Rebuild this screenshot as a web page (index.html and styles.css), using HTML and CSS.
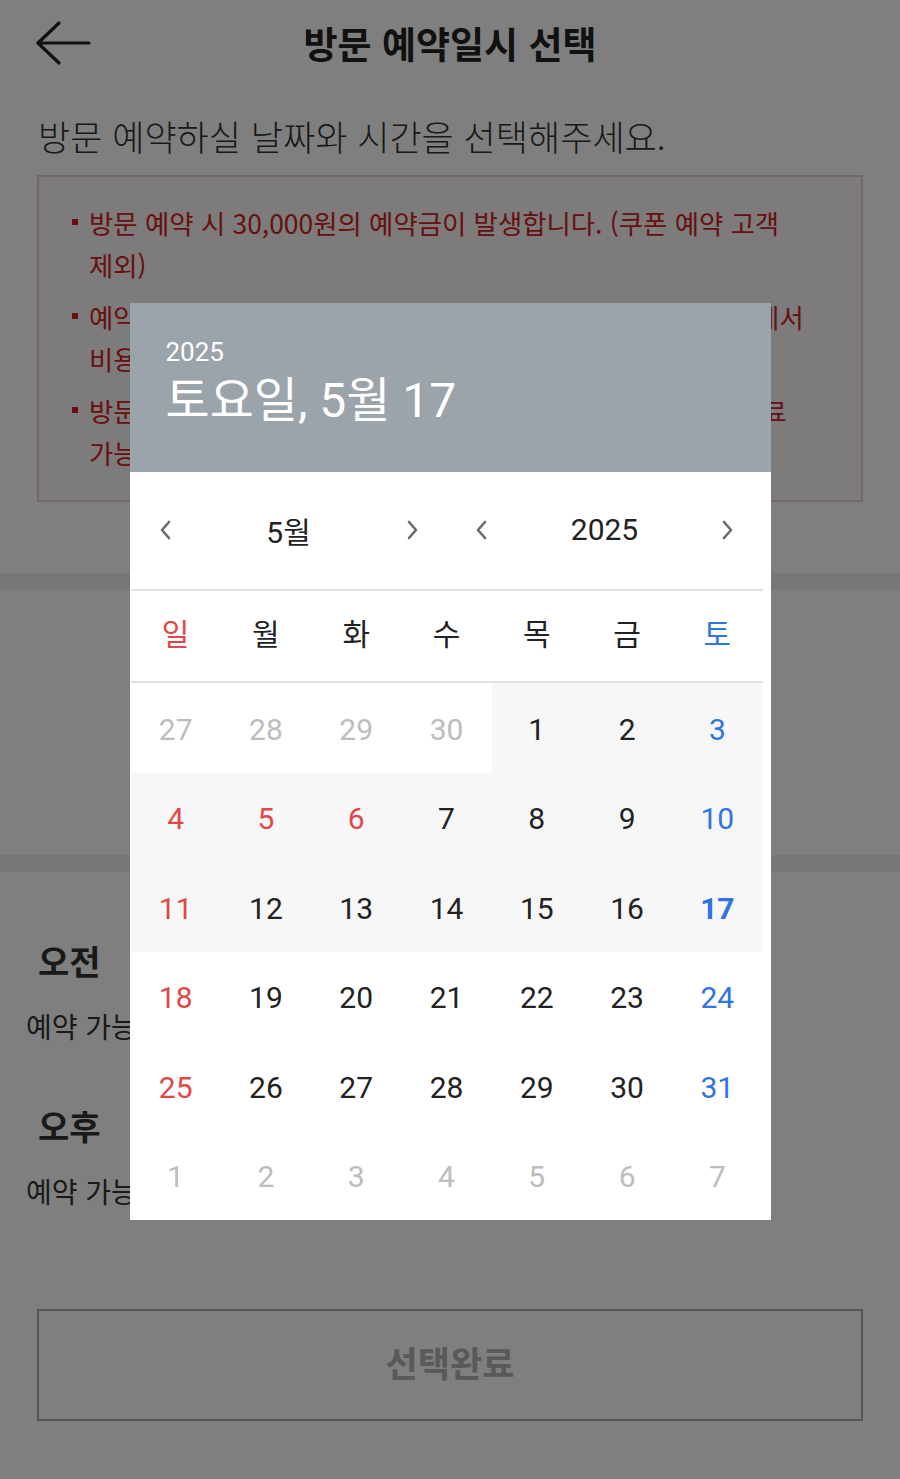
FILE: index.html
```html
<!DOCTYPE html>
<html lang="ko">
<head>
<meta charset="utf-8">
<title>방문 예약일시 선택</title>
<link rel="stylesheet" href="styles.css">
</head>
<body>
<div class="page">
  <header class="topbar">
    <span class="back">
      <svg width="58" height="46" viewBox="0 0 58 46"><polyline points="24,3 3,23 24,43" fill="none" stroke="#222" stroke-width="3.2" stroke-linecap="round" stroke-linejoin="round"/><line x1="3" y1="23" x2="54" y2="23" stroke="#222" stroke-width="3.2" stroke-linecap="round"/></svg>
    </span>
    <h1 class="title">방문 예약일시 선택</h1>
    <span></span>
  </header>

  <p class="intro">방문 예약하실 날짜와 시간을 선택해주세요.</p>

  <ul class="notice">
    <li>방문 예약 시 30,000원의 예약금이 발생합니다. (쿠폰 예약 고객 제외)</li>
    <li>예약 변경 및 취소는 방문 하루 전까지 고객센터나 마이페이지에서 비용 없이 가능합니다.</li>
    <li>방문 상담 후 계약 시 예약금은 시공비에서 전액이 차감되며 무료 가능합니다.</li>
  </ul>

  <div class="band"></div>
  <section class="date-area"></section>
  <div class="band"></div>

  <section class="times">
    <h3 class="slot-title">오전</h3>
    <p class="slot-info">예약 가능한 시간이 없습니다.</p>
    <h3 class="slot-title pm">오후</h3>
    <p class="slot-info">예약 가능한 시간이 없습니다.</p>
  </section>

  <button class="done">선택완료</button>
</div>

<div class="overlay">
  <div class="dialog">
    <div class="dlg-head">
      <div class="dlg-year">2025</div>
      <div class="dlg-date">토요일, 5월 17</div>
    </div>
    <div class="dlg-body">
      <div class="nav">
        <div class="nav-half">
          <svg class="chev" width="14" height="22" viewBox="0 0 14 22"><polyline points="10,3 3,11 10,19" fill="none" stroke="#6b6b6b" stroke-width="2.6" stroke-linecap="round" stroke-linejoin="round"/></svg>
          <span class="nav-label">5월</span>
          <svg class="chev" width="14" height="22" viewBox="0 0 14 22"><polyline points="4,3 11,11 4,19" fill="none" stroke="#6b6b6b" stroke-width="2.6" stroke-linecap="round" stroke-linejoin="round"/></svg>
        </div>
        <div class="nav-half">
          <svg class="chev" width="14" height="22" viewBox="0 0 14 22"><polyline points="10,3 3,11 10,19" fill="none" stroke="#6b6b6b" stroke-width="2.6" stroke-linecap="round" stroke-linejoin="round"/></svg>
          <span class="nav-label">2025</span>
          <svg class="chev" width="14" height="22" viewBox="0 0 14 22"><polyline points="4,3 11,11 4,19" fill="none" stroke="#6b6b6b" stroke-width="2.6" stroke-linecap="round" stroke-linejoin="round"/></svg>
        </div>
      </div>
      <div class="weekdays">
        <span class="sun">일</span><span>월</span><span>화</span><span>수</span><span>목</span><span>금</span><span class="sat">토</span>
      </div>
      <div class="days">
        <span class="other">27</span><span class="other">28</span><span class="other">29</span><span class="other">30</span><span class="wk">1</span><span class="wk">2</span><span class="wk sat">3</span>
        <span class="wk sun">4</span><span class="wk sun">5</span><span class="wk sun">6</span><span class="wk">7</span><span class="wk">8</span><span class="wk">9</span><span class="wk sat">10</span>
        <span class="wk sun">11</span><span class="wk">12</span><span class="wk">13</span><span class="wk">14</span><span class="wk">15</span><span class="wk">16</span><span class="wk sat sel">17</span>
        <span class="sun">18</span><span>19</span><span>20</span><span>21</span><span>22</span><span>23</span><span class="sat">24</span>
        <span class="sun">25</span><span>26</span><span>27</span><span>28</span><span>29</span><span>30</span><span class="sat">31</span>
        <span class="other">1</span><span class="other">2</span><span class="other">3</span><span class="other">4</span><span class="other">5</span><span class="other">6</span><span class="other">7</span>
      </div>
    </div>
  </div>
</div>
</body>
</html>
```

FILE: styles.css
```css
* { box-sizing: border-box; }
html, body { margin: 0; padding: 0; }
body {
  width: 900px;
  height: 1479px;
  background: #fff;
  font-family: "Noto Sans CJK KR", "Noto Sans", sans-serif;
  color: #222;
  overflow: hidden;
  position: relative;
}
.page { width: 900px; height: 1479px; }

.topbar {
  display: grid;
  grid-template-columns: 100px 1fr 100px;
  align-items: center;
  height: 86px;
}
.back { display: flex; padding-left: 35px; }
.back svg { display: block; }
.title {
  margin: 0;
  text-align: center;
  font-size: 37px;
  font-weight: 700;
  line-height: 50px;
  color: #222;
}

.intro {
  margin: 28px 0 0 38px;
  font-size: 35px;
  font-weight: 300;
  color: #333;
  line-height: 44px;
  height: 44px;
}

.notice {
  list-style: none;
  margin: 17px 37px 0 37px;
  padding: 25px 26px 27px 33px;
  border: 2px solid #e6cfcf;
  background: #fbf7f7;
  height: 327px;
  overflow: hidden;
}
.notice li {
  display: flex;
  font-size: 26.4px;
  line-height: 42px;
  color: #cf2222;
  margin-bottom: 10px;
  word-break: keep-all;
}
.notice li::before {
  content: "";
  flex: none;
  width: 6px;
  height: 6px;
  background: #cf2222;
  margin: 17px 11px 0 0;
}

.band { height: 17px; background: #eeeeee; }
.notice + .band { margin-top: 71px; }
.date-area { height: 265px; }

.times { padding: 66px 0 0 0; }
.slot-title {
  margin: 0 0 0 38px;
  font-size: 34px;
  font-weight: 700;
  line-height: 46px;
  color: #333;
}
.slot-title.pm { margin-top: 57px; }
.slot-info {
  margin: 22px 0 0 26px;
  font-size: 28px;
  line-height: 40px;
  color: #333;
}

.done {
  display: block;
  margin: 98px 37px 0 37px;
  width: 826px;
  height: 112px;
  border: 2px solid #aaaaaa;
  background: #fff;
  font-family: "Noto Sans CJK KR", sans-serif;
  font-size: 35px;
  font-weight: 700;
  color: #b2b2b2;
  padding: 0 0 8px 0;
}

.overlay {
  position: absolute;
  inset: 0;
  background: rgba(0, 0, 0, 0.5);
  display: flex;
  justify-content: center;
  align-items: flex-start;
  padding-top: 303px;
}
.dialog {
  width: 641px;
  height: 917px;
  background: #fff;
  font-family: Roboto, "Noto Sans CJK KR", sans-serif;
}
.dlg-head {
  height: 169px;
  background: #9ba3ab;
  color: #fff;
  padding: 34px 0 0 36px;
}
.dlg-year { font-size: 26px; line-height: 31px; }
.dlg-date { font-size: 48px; line-height: 56px; margin-top: 5px; }

.dlg-body { padding: 0 8px 0 1px; }
.nav {
  display: grid;
  grid-template-columns: 1fr 1fr;
  height: 119px;
  border-bottom: 2px solid #e2e2e2;
}
.nav-half {
  display: flex;
  align-items: center;
  justify-content: space-between;
  padding: 0 28px 2px 28px;
}
.chev { display: block; }
.nav-label { font-size: 30px; color: #222; }

.weekdays {
  display: grid;
  grid-template-columns: repeat(7, 1fr);
  height: 92px;
  border-bottom: 2px solid #e2e2e2;
  align-items: center;
  text-align: center;
  font-family: "Noto Sans CJK KR", sans-serif;
  font-size: 30px;
  color: #222;
  padding-bottom: 8px;
}
.days {
  display: grid;
  grid-template-columns: repeat(7, 1fr);
  grid-auto-rows: 89.5px;
  font-size: 30px;
  color: #222;
}
.days span {
  display: flex;
  align-items: center;
  justify-content: center;
  padding-top: 3px;
}
.days .wk { background: #f7f7f7; }
.sun { color: #e04848; }
.sat { color: #2f74df; }
.days .other { color: #bdbdbd; }
.days .sel { font-weight: 700; }
```
